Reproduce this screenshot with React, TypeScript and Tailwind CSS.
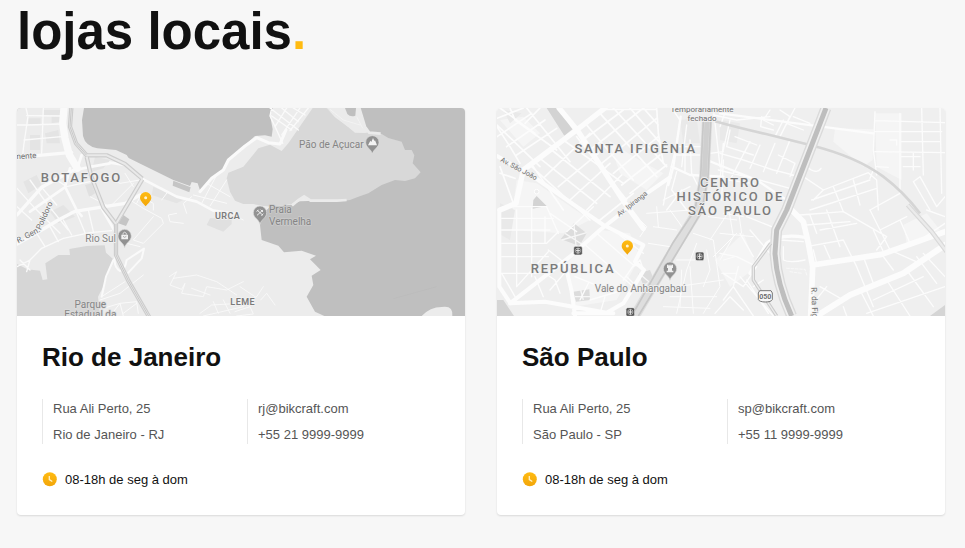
import type { ReactNode } from "react";

const label = "font-['Roboto','Liberation_Sans',sans-serif]";
const halo = { strokeWidth: 5, strokeLinejoin: "round", paintOrder: "stroke" } as const;

type LabelProps = {
  x: number;
  y: number;
  children: string;
  anchor?: "start" | "middle";
  rotate?: number;
  size?: number;
  glow?: string;
};

function Place({ x, y, children, anchor = "start", glow = "#f2f2f2" }: LabelProps) {
  return (
    <text x={x} y={y} textAnchor={anchor} fontSize={30} fill="#858585" stroke={glow} className={label} {...halo}>
      {children}
    </text>
  );
}

function District({ x, y, children, small = false }: LabelProps & { small?: boolean }) {
  return (
    <text
      x={x}
      y={y}
      textAnchor="middle"
      fontSize={small ? 27 : 39}
      fontWeight={small ? 600 : 500}
      fill="#7b7b7b"
      stroke="#f2f2f2"
      className={small ? `${label} tracking-wider` : `${label} tracking-[0.14em]`}
      {...halo}
    >
      {children}
    </text>
  );
}

function Street({ x, y, children, rotate = 0, anchor = "start", size = 21 }: LabelProps) {
  return (
    <text
      x={x}
      y={y}
      textAnchor={anchor}
      fontSize={size}
      fill="#6e6e6e"
      stroke="#f2f2f2"
      transform={`rotate(${rotate} ${x} ${y})`}
      className={label}
      {...halo}
    >
      {children}
    </text>
  );
}

function GrayPin({ x, y, children }: { x: number; y: number; children: ReactNode }) {
  return (
    <g transform={`translate(${x} ${y})`}>
      <path
        d="M0 35C-3 20-20 16-20 0A20 20 0 1 1 20 0C20 16 3 20 0 35Z"
        fill="#929292"
        stroke="#dedede"
        strokeWidth={2}
      />
      {children}
    </g>
  );
}

function StorePin({ x, y, id }: { x: number; y: number; id: string }) {
  return (
    <g transform={`translate(${x} ${y})`}>
      <defs>
        <linearGradient id={id} x1="0" y1="0" x2="0" y2="1">
          <stop offset="0" stopColor="#ffbb11" />
          <stop offset="1" stopColor="#f2a60a" />
        </linearGradient>
      </defs>
      <path d="M0 24C-5 17-17 8-17-2A17 17 0 0 1 17-2C17 8 5 17 0 24Z" fill={`url(#${id})`} />
      <circle cy={-2} r={4.5} fill="#fff3d0" />
    </g>
  );
}

function Metro({ x, y }: { x: number; y: number }) {
  return (
    <g transform={`translate(${x} ${y})`}>
      <rect x={-13} y={-13} width={26} height={26} rx={5} fill="#555" stroke="#f4f4f4" strokeWidth={2} />
      <circle r={8} fill="none" stroke="#eee" strokeWidth={1.5} />
      <path d="M0-8V8M-6 0H6" stroke="#eee" strokeWidth={3} />
    </g>
  );
}

function RioMap() {
  return (
    <svg viewBox="21 24 1344 624" className="block h-auto w-full" role="img" aria-label="Mapa do Rio de Janeiro">
      <rect x={21} y={24} width={1344} height={624} fill="#bfbfbf" />
      {/* mainland */}
      <path
        d="M21 24H222L216 60 219 108Q226 138 262 145L318 150 350 165 356 174 490 240 540 258 545 246 563 250 570 271 605 235 640 210 655 178 705 135 735 108 765 106 785 110 788 88 780 45 789 24H950L990 55 1035 94 1070 97 1060 200 990 300 870 304 845 314 780 320 755 345 750 375 755 420 805 437 822 457 875 452 918 467 900 478 932 510 905 527 910 555 890 590 915 635 943 648H21Z"
        fill="#ececec"
      />
      {/* Pão de Açucar park */}
      <path
        d="M908 24H950L975 52 1035 96 1070 99 1095 97 1115 102 1135 114 1175 125 1185 150 1205 150 1213 166 1208 190 1232 217 1215 235 1185 243 1155 240 1115 255 1075 280 1045 290 1020 300 990 304 900 303 882 290 862 299 845 312 790 320 760 318 730 312 700 312 675 302 660 275 650 235 655 218 700 200 745 145 780 134 815 153 835 130Z"
        fill="#d8d8d8"
      />
      <path d="M846 317Q865 298 882 289L902 302H980L1010 300" fill="none" stroke="#ebebeb" strokeWidth={8} />
      <path d="M950 24H1048L1065 80 1078 98 1035 98 990 60Z" fill="#ebebeb" />
      <path d="M1005 24 1012 42Q1022 53 1036 47L1038 24Z" fill="#bfbfbf" />
      <path d="M960 28 1000 60 1050 75M1040 50 1058 85" fill="none" stroke="#f6f6f6" strokeWidth={2} />
      <path d="M1048 24 1065 80 1078 98 1112 101" fill="none" stroke="#ebebeb" strokeWidth={8} />
      <path d="M1235 648Q1260 621 1295 621 1330 615 1327 648Z" fill="#ececec" />
      <path d="M1150 596 1280 560" stroke="#b8b8b8" strokeWidth={1.5} />
      {/* southwest park and gray plots */}
      <path
        d="M21 492 52 508 90 512 98 540 112 538 106 490 145 465 180 465 178 447 230 438 284 436 288 458 312 480 300 500 285 550 264 590 270 648H21Z"
        fill="#d6d6d6"
      />
      <path d="M340 345 358 358 348 378 325 370ZM490 242 542 262 538 277 488 257Z" fill="#c5c5c5" />
      <path d="M600 355H665V372L640 395 590 375ZM225 255 245 250 255 280 238 292Z" fill="#e0e0e0" />
      <g fill="#e4e4e4">
        <path d="M100 30H150V65L125 70V47H100ZM60 105H90V150H60ZM105 100 145 90 150 130H110ZM55 55H92V73H55ZM40 245 80 225 95 255 55 280Z" />
        <path d="M255 170 300 180 280 205 245 215ZM430 260 520 300 500 310 425 285ZM120 335 160 315 195 350 145 370Z" />
      </g>
      <g fill="none" stroke="#fafafa" strokeLinejoin="round" strokeLinecap="round">
        {/* arterial roads */}
        <path d="M162 24 158 70 165 115 178 165 202 205" strokeWidth={22} />
        <path d="M21 172 185 157M21 432 75 402 145 360 195 334 345 310 390 285M202 205 150 232 95 262 21 345" strokeWidth={10} />
        <path d="M180 205 165 260 200 330 215 348M215 165 202 205M210 207 245 200 300 190M300 188 345 195 400 238 500 290 560 305 610 332 680 342M272 320 325 412M160 265 60 335" strokeWidth={8} />
        <path d="M570 275 605 235 640 210 655 180 705 138 740 113 775 128 810 132 828 90" strokeWidth={9} />
        <path d="M315 470Q310 500 330 513 345 510 350 480L402 446 395 475 355 518M310 480 288 530 275 590M400 238 345 330" strokeWidth={6} />
        {/* side streets */}
        <path
          d="M48 24 54 50 42 130 38 165M100 24 95 160M21 75 54 75 152 72M50 47 155 48M42 120 155 110M60 240 110 310 175 390M21 265 75 325 150 400M95 262 140 315M140 240 170 260 240 245M21 320 65 360M60 480 95 445 160 415 240 398 305 392M80 400 105 440M120 380 145 425M160 360 185 405M200 338 225 398M235 330 250 395M145 360 200 330M21 500 60 480 50 515M30 480 60 510"
          strokeWidth={4}
        />
        <path
          d="M300 235 330 250 390 240M240 290 300 320 370 250M345 220 370 260M360 300 400 325 455 355 460 370 400 430 370 420 430 350M390 440 350 430M380 310 390 290 430 310 430 330M455 300 470 280M420 285 410 315M500 340 475 345 480 365 520 370M530 340 520 310 545 290M575 310 620 225M600 318 650 240M550 285 650 310M590 250 660 290M620 350 650 335 700 360"
          strokeWidth={3}
        />
        <path
          d="M785 24 780 48 800 90 818 130M785 48 845 90M815 24 865 65M850 24 885 45M830 24 795 80M870 24 815 105M895 24 840 92M780 24 865 90"
          strokeWidth={4}
        />
        <path
          d="M478 530 500 515 480 555 515 568 525 550 515 580 580 590 590 560 650 570 700 545M490 535 560 525 620 545 680 585M545 565 600 585M570 640 605 615 690 610 740 590 760 560M580 648 700 620M640 600 660 640M675 635 720 620 730 642 680 648M752 600 770 580 795 615M610 605 625 640M690 560 735 590"
          strokeWidth={2.5}
        />
        <path d="M270 600 330 580 400 525M275 590 345 545M300 648 330 610 380 605 385 640M340 640 380 610M280 625 330 610 340 648" strokeWidth={3} />
      </g>
      {/* expressway */}
      <g fill="none" strokeLinejoin="round">
        <path d="M184 24 180 80 198 130 230 166H290L345 192 397 236M230 170 244 230 280 322 318 372 318 465 355 542 418 652M397 238 320 368" stroke="#cdcdcd" strokeWidth={13} />
        <path d="M184 24 180 80 198 130 230 166H290L345 192 397 236M230 170 244 230 280 322 318 372 318 465 355 542 418 652M397 238 320 368" stroke="#e9e9e9" strokeWidth={6} />
        <path d="M184 24 180 80 198 130 230 166M318 372 318 465 355 542 418 652" stroke="#c7c7c7" strokeWidth={3} />
      </g>
      <Street x={12} y={178} rotate={-3} size={24}>mente</Street>
      <Street x={25} y={430} rotate={-28} size={24}>R. Gen.</Street>
      <Street x={92} y={391} rotate={-66} size={24}>Polidoro</Street>
      <District x={214} y={246}>BOTAFOGO</District>
      <District x={653} y={357} small>URCA</District>
      <District x={698} y={615} small>LEME</District>
      <Place x={226} y={425}>Rio Sul</Place>
      <Place x={241} y={623} anchor="middle" glow="#dcdcdc">Parque</Place>
      <Place x={241} y={655} anchor="middle" glow="#dcdcdc">Estadual da</Place>
      <Place x={867} y={144} glow="#dcdcdc">Pão de Açucar</Place>
      <Place x={777} y={340} glow="#cbcbcb">Praia</Place>
      <Place x={777} y={374} glow="#cbcbcb">Vermelha</Place>
      <GrayPin x={344} y={408}>
        <path d="M-10-4H10V10H-10Z" fill="#f1f1f1" />
        <path d="M-5-4V-8Q0-15 5-8V-4" fill="none" stroke="#f1f1f1" strokeWidth={2.5} />
        <path d="M-5 1Q0 7 5 1" fill="none" stroke="#888" strokeWidth={2} />
      </GrayPin>
      <GrayPin x={1087} y={127}>
        <path d="M-13 9-6-5-3-1 2-13 6-4 8-6 14 9Z" fill="#f3f3f3" />
      </GrayPin>
      <GrayPin x={750} y={338}>
        <path d="M-9-8 9 8M-9 8 9-8M-10-3-4-9M4 9 10 3M2-9 9-2" stroke="#eee" strokeWidth={3} />
      </GrayPin>
      <StorePin x={407} y={295} id="pin-rj" />
    </svg>
  );
}

function SaoPauloMap() {
  return (
    <svg viewBox="21 24 1344 624" className="block h-auto w-full" role="img" aria-label="Mapa de São Paulo">
      <rect x={21} y={24} width={1344} height={624} fill="#efefef" />
      <g fill="#f5f5f5">
        <path d="M355 120 430 170 520 220 470 270 390 220ZM80 240 140 250 300 360 220 400 60 390ZM330 390 420 400 450 470 380 600 250 620 230 490ZM675 480 760 400 800 500 720 560ZM30 60 100 50 150 100 100 140Z" />
        <path d="M1035 85 1150 88 1148 180 1120 200 1030 125ZM1155 40 1235 40V240L1160 200ZM1240 375 1310 340 1350 390 1250 430Z" />
      </g>
      <g fill="#e9e9e9">
        <path d="M40 30 95 40 60 70ZM570 60 620 55 630 130 580 130ZM690 60 750 70 740 130 690 120ZM30 310 75 330 60 420 25 400Z" />
      </g>
      <path d="M170 24H203L247 88 223 107ZM130 300 140 288 170 318 128 326Z" fill="#d3d3d3" />
      <path d="M21 600 40 600 72 648H21ZM1320 648 1365 615V648Z" fill="#d5d5d5" />
      <path d="M252 370 290 400 268 438 212 417ZM250 575 298 568 300 600 258 605ZM445 520 480 510 490 535 460 555Z" fill="#dcdcdc" />
      <path d="M225 400 275 432M252 375 258 438M290 398 215 420M255 590H300M272 570 280 600M447 520 482 550" stroke="#f6f6f6" strokeWidth={4} />

      <g fill="none" stroke="#fcfcfc" strokeLinejoin="round" strokeLinecap="round">
        {/* side streets */}
        <path
          d="M30 24 135 100M21 55 100 24M21 75 150 200M60 24 75 60 200 150M21 110 125 40M50 140 165 60M80 165 200 85M110 24 240 185M150 24 105 70M125 200 300 360M21 80 60 140 90 190M150 175 320 310M185 150 360 290M220 120 400 250M130 200 220 330M165 230 300 100M205 260 325 160M240 300 360 190M290 330 395 225M330 360 430 280M30 200 70 310M30 220 75 235"
          strokeWidth={5}
        />
        <path
          d="M290 75 430 240M330 40 500 230M370 24 530 200M420 24 520 140M460 24 505 75M280 120 400 30M300 150 460 24M335 190 500 55M370 220 505 110M395 255 510 165M420 280 530 195M500 24 505 100 520 190M260 110 410 300M500 28H350"
          strokeWidth={5}
        />
        <path
          d="M545 24 570 60 560 130 530 260 520 315M590 75 575 200M560 140H640M560 165H635M600 120 605 220 625 260M585 150V215M560 215 545 270 590 330M575 270 530 330M520 300 600 260M660 160 700 155M670 24 690 200M700 130 690 240M720 60 700 150"
          strokeWidth={4}
        />
        <path
          d="M35 355H190M35 390H180M35 430H170M35 470H175M35 520H150M80 330V560M125 325V530M165 350V430M50 320H170L205 400M35 520 75 590M80 560 175 455M135 530 160 590M175 450 225 490M170 430 205 395M180 340 260 395M150 510 195 540 210 580M230 395 310 320M320 400 430 495 455 500M350 375 460 460M280 430 430 560M300 600 400 570M240 500 180 570M255 530 330 560M270 600 295 550M330 640 345 590M400 540 435 490M410 530 430 550M430 500 450 480 460 510 430 560"
          strokeWidth={4}
        />
        <path
          d="M470 340 600 330M440 350 470 380 450 410M490 380 560 390M475 430 540 440M540 330 590 400M500 320 505 380M610 400 670 420 690 560 640 640M620 430 590 510 560 640M640 480 560 480M650 450 660 510 640 560M560 560 700 540M540 590 680 590M520 620 660 625M600 500 610 640M575 510 570 620M660 420 720 330M670 470 740 400M700 340 760 350M690 400 790 410M700 480 735 470M695 520 740 520M655 350 740 360M715 320 730 410 690 480M745 330 755 400"
          strokeWidth={3}
        />
        <path
          d="M690 160 760 180 850 210 930 230M780 125 720 240M810 135 780 205M855 130 820 215M880 90 915 24M855 110 880 60M670 45 740 60 840 50M840 30 820 60 850 75M870 30 900 50 870 110M890 70 940 90M910 50 960 70M900 120 860 220M690 80 710 24M720 90 710 140 790 165M685 210 790 235 900 265M700 180 695 300M715 240 790 250M865 165 915 190 900 230M950 200Q980 225 993 205M815 50 812 80 850 90M735 110 800 135"
          strokeWidth={4}
        />
        <path
          d="M940 230 1000 270 1135 218 1160 240 1165 330M1000 270 970 300M1030 260 1060 335M965 300 1140 240M960 330 1160 265M1150 210 1140 235M1090 240 1110 315M1230 280 1140 330M1270 245 1290 230 1340 320 1365 290M1270 245 1320 330M1155 35 1150 150 1160 225M1155 62 1365 68M1155 95H1355M1155 155 1365 158M1230 40V280M1295 24 1300 225M1350 24 1355 280M1235 125H1350M1235 170H1290M1200 120H1220V135M1240 200H1290M1270 160V210M1160 200 1195 202"
          strokeWidth={4}
        />
        <path
          d="M930 345 1060 335 1190 410 1160 450M950 375 1080 365M1010 330 1050 440M960 345 980 400M990 390 1100 370M950 440 1060 420M1000 430 1020 475M1060 420 1100 500 1150 620M1140 330 1170 390 1250 350M1150 390 1180 455M1170 390 1200 450 1290 490M970 450 980 490M1230 360 1260 430M1180 470 1210 510M1120 470 1150 550M1190 540 1260 648M1250 510 1330 620M1280 470 1340 550M1300 460 1365 530M1365 370 1290 420M1110 570 1150 648M990 560 1060 600M970 610 1010 560M1150 600 1300 530M1130 640 1365 560M1060 620 1070 648M1310 330 1365 350M880 440V480Q900 490 945 480M870 420 940 425"
          strokeWidth={4}
        />
        <path d="M690 460 740 470 800 500 760 560 700 520M750 530 850 648M770 540 835 640M730 560 790 648M745 500 730 560 700 600M675 640 720 590 760 630M790 560 820 540M750 400 790 470M780 390 840 460M770 350 845 380" strokeWidth={4} />
        <path d="M890 505 945 508 950 525M900 515 935 520" strokeWidth={2} strokeDasharray="8 5" />
        {/* avenues */}
        <path d="M207 24 265 95 405 310 460 385M345 24 260 90 100 210 78 310 30 330" strokeWidth={16} />
        <path d="M21 168 145 240 260 320 340 375 460 435 435 485 462 510 400 610 350 638 165 605 60 610M540 232 470 280 330 390 240 470 60 610M28 330V560L60 608M225 490 245 575 255 648M250 640H370" strokeWidth={12} />
        <path d="M572 50 550 200 535 255M545 200 600 225 700 230M650 180 800 240 890 300M690 40 1150 100" strokeWidth={7} />
        <path d="M895 320 940 365 955 430 968 500 962 648M968 495 1175 463 1365 395" strokeWidth={17} />
        <path d="M980 648 1080 585 1240 520 1365 435" strokeWidth={18} />
        <path d="M780 520 830 430Q870 400 945 412M640 180 625 290" strokeWidth={10} />
      </g>
      <circle cx={140} cy={275} r={7} fill="#eee" stroke="#fff" strokeWidth={3} />
      {/* railways and expressways */}
      <g fill="none" strokeLinejoin="round">
        <path d="M651 65 643 230 625 330 560 435 432 652" stroke="#dedede" strokeWidth={31} />
        <path d="M640 65 632 230 615 330 548 430 425 648M662 65 654 230 635 335 572 440 445 648" stroke="#c8c8c8" strokeWidth={5} />
        <path d="M651 65 643 230" stroke="#cfcfcf" strokeWidth={15} />
        <path d="M675 64Q750 85 840 105L960 135Q1100 170 1180 230 1240 275 1290 340" stroke="#d5d5d5" strokeWidth={8} />
        <path d="M1253 315 1325 395 1370 455" stroke="#d9d9d9" strokeWidth={14} />
        <path d="M1253 315 1325 395 1370 455" stroke="#ebebeb" strokeWidth={7} />
        <path d="M1008 24 890 330 860 390 855 460Q860 550 905 648" stroke="#dadada" strokeWidth={33} />
        <path d="M1008 24 890 330 860 390 855 460Q860 550 905 648" stroke="#f0f0f0" strokeWidth={25} />
        <path d="M1008 24 890 330 860 390 855 460Q860 550 905 648" stroke="#bebebe" strokeWidth={15} />
        <path d="M842 430 790 500V540L860 648" stroke="#cbcbcb" strokeWidth={10} />
        <path d="M842 430 790 500V540L860 648" stroke="#ebebeb" strokeWidth={4} />
      </g>

      <Street x={30} y={184} rotate={28}>Av. São João</Street>
      <Street x={388} y={350} rotate={-38}>Av. Ipiranga</Street>
      <Street x={636} y={37} anchor="middle" size={24}>Temporariamente</Street>
      <Street x={636} y={63} anchor="middle" size={24}>fechado</Street>
      <Street x={964} y={562} rotate={88} size={24}>R. da Figueira</Street>
      <District x={437} y={160}>SANTA IFIGÊNIA</District>
      <District x={721} y={260}>CENTRO</District>
      <District x={721} y={303}>HISTÓRICO DE</District>
      <District x={721} y={345}>SÃO PAULO</District>
      <District x={249} y={518}>REPÚBLICA</District>
      <Place x={452} y={577} anchor="middle">Vale do Anhangabaú</Place>
      <Metro x={264} y={452} />
      <Metro x={629} y={469} />
      <Metro x={421} y={636} />
      <g transform="translate(826 589)">
        <path d="M-17-17H17L21-10V10Q17 17 0 17T-21 10V-10Z" fill="#f7f7f7" stroke="#777" strokeWidth={3} />
        <text y={8} textAnchor="middle" fontSize={21} fontWeight={600} fill="#666" className={label}>050</text>
      </g>
      <GrayPin x={540} y={506}>
        <path d="M-9-12H-4V-9H-2V-12H2V-9H4V-12H9V-2H6V6H10V11H-10V6H-6V-2H-9Z" fill="#f1f1f1" />
      </GrayPin>
      <StorePin x={412} y={440} id="pin-sp" />
    </svg>
  );
}

function ClockIcon({ id }: { id: string }) {
  return (
    <svg viewBox="0 0 16 16" className="size-4 shrink-0" aria-hidden="true">
      <defs>
        <linearGradient id={id} x1="0" y1="0" x2="0" y2="1">
          <stop offset="0" stopColor="#ffbb11" />
          <stop offset="1" stopColor="#f2a60a" />
        </linearGradient>
      </defs>
      <circle cx={7.8} cy={7.3} r={7} fill={`url(#${id})`} />
      <path d="M7.3 4V7.6L10.3 9.5" fill="none" stroke="#fff0c4" strokeWidth={1.3} />
    </svg>
  );
}

type Store = { id: string; city: string; place: string; email: string; phone: string; map: ReactNode };

const stores: Store[] = [
  { id: "rj", city: "Rio de Janeiro", place: "Rio de Janeiro - RJ", email: "rj@bikcraft.com", phone: "+55 21 9999-9999", map: <RioMap /> },
  { id: "sp", city: "São Paulo", place: "São Paulo - SP", email: "sp@bikcraft.com", phone: "+55 11 9999-9999", map: <SaoPauloMap /> },
];

function StoreCard({ store }: { store: Store }) {
  return (
    <article className="overflow-hidden rounded bg-white shadow-[0_1px_2px_rgba(0,0,0,0.12)]">
      {store.map}
      <div className="px-[25px] py-[26px] text-[13px] leading-[19px]">
        <h2 className="text-[26px] font-bold leading-[30px]">{store.city}</h2>
        <div className="mt-[27px] grid grid-cols-2 gap-3 text-[#555]">
          <address className="flex flex-col gap-[7px] border-l border-[#e8e8e8] pl-2.5 not-italic">
            <p>Rua Ali Perto, 25</p>
            <p>{store.place}</p>
          </address>
          <div className="flex flex-col items-start gap-[7px] border-l border-[#e8e8e8] pl-2.5">
            <a href={`mailto:${store.email}`}>{store.email}</a>
            <a href={`tel:${store.phone.replace(/[^+\d]/g, "")}`}>{store.phone}</a>
          </div>
        </div>
        <p className="mt-[26px] flex items-center gap-[7px]">
          <ClockIcon id={`clock-${store.id}`} />
          08-18h de seg à dom
        </p>
      </div>
    </article>
  );
}

export default function App() {
  return (
    <main className="min-h-screen bg-[#f7f7f7] pb-8 pl-[17px] pr-5 pt-0.5 font-['Liberation_Sans',Arial,sans-serif] text-[#111]">
      <h1 className="text-[51px] font-bold leading-[60px]">
        lojas locais<span className="text-[#ffbb11]">.</span>
      </h1>
      <div className="mt-[46px] grid grid-cols-2 gap-8">
        {stores.map((store) => (
          <StoreCard key={store.id} store={store} />
        ))}
      </div>
    </main>
  );
}
